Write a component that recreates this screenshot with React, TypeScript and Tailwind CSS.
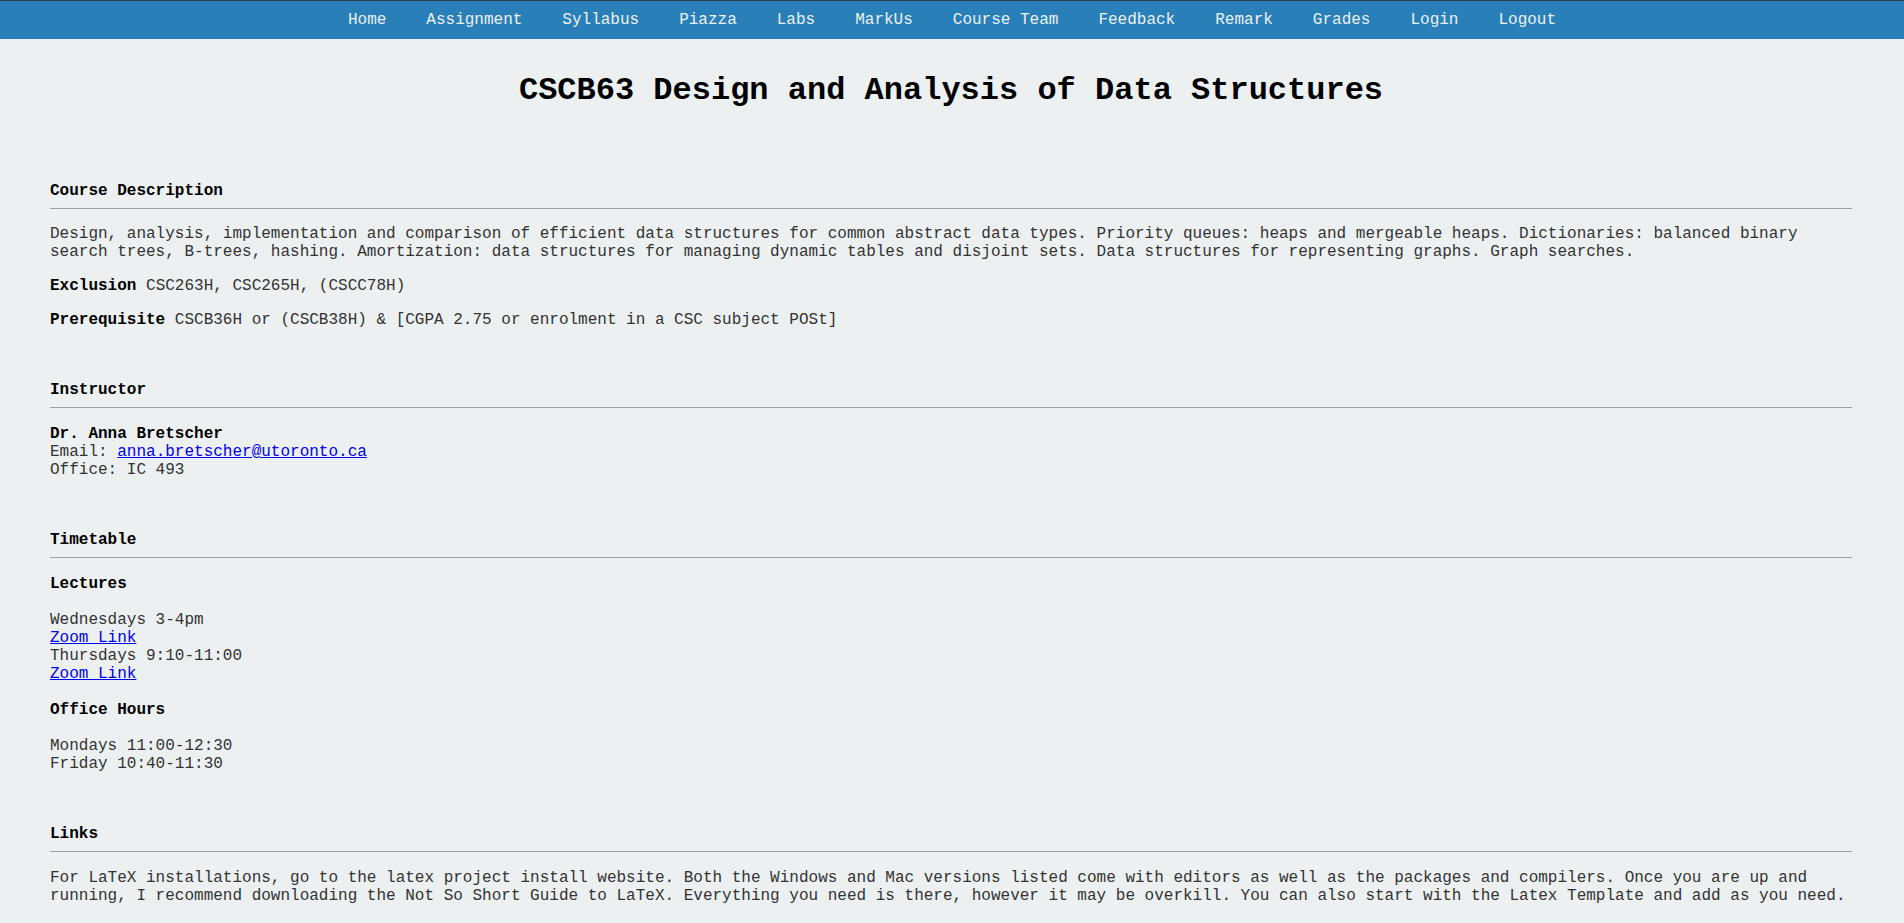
import React from "react";

const NAV_ITEMS = [
  "Home",
  "Assignment",
  "Syllabus",
  "Piazza",
  "Labs",
  "MarkUs",
  "Course Team",
  "Feedback",
  "Remark",
  "Grades",
  "Login",
  "Logout",
];

const Section = ({
  title,
  first,
  children,
}: {
  title: string;
  first?: boolean;
  children: React.ReactNode;
}) => (
  <section className={first ? "mt-[73px]" : "mt-[52px]"}>
    <h4 className="font-bold text-black">{title}</h4>
    <hr className="mt-2 border-0 h-px bg-[#a0a0a0]" />
    <div className={first ? "mt-4 flex flex-col gap-4" : "mt-[17px] flex flex-col gap-4"}>
      {children}
    </div>
  </section>
);

const Link = ({ children }: { children: React.ReactNode }) => (
  <a href="#" className="text-[#0000ee] underline">
    {children}
  </a>
);

export default function App() {
  return (
    <div className="min-h-screen bg-[#ecf0f1] font-['Liberation_Mono','Courier_New',monospace] text-[16px] leading-[normal] text-[#333]">
      <nav className="h-[39px] border-t border-[#2c3e50] bg-[#2980b9]">
        <ul className="flex h-full items-center justify-center">
          {NAV_ITEMS.map((item) => (
            <li key={item} className="px-5">
              <a href="#" className="text-[#ecf0f1]">
                {item}
              </a>
            </li>
          ))}
        </ul>
      </nav>

      <main className="ml-[50px] mr-[52px] pb-8">
        <h1 className="mt-[33px] text-center text-[32px] font-bold text-black">
          CSCB63 Design and Analysis of Data Structures
        </h1>

        <Section title="Course Description" first>
          <p>
            Design, analysis, implementation and comparison of efficient data structures for
            common abstract data types. Priority queues: heaps and mergeable heaps. Dictionaries:
            balanced binary search trees, B-trees, hashing. Amortization: data structures for
            managing dynamic tables and disjoint sets. Data structures for representing graphs.
            Graph searches.
          </p>
          <p>
            <b className="text-black">Exclusion</b> CSC263H, CSC265H, (CSCC78H)
          </p>
          <p>
            <b className="text-black">Prerequisite</b> CSCB36H or (CSCB38H) &amp; [CGPA 2.75 or
            enrolment in a CSC subject POSt]
          </p>
        </Section>

        <Section title="Instructor">
          <p>
            <b className="text-black">Dr. Anna Bretscher</b>
            <br />
            Email: <Link>anna.bretscher@utoronto.ca</Link>
            <br />
            Office: IC 493
          </p>
        </Section>

        <Section title="Timetable">
          <div className="flex flex-col gap-[18px]">
            <h5 className="font-bold text-black">Lectures</h5>
            <p>
              Wednesdays 3-4pm
              <br />
              <Link>Zoom Link</Link>
              <br />
              Thursdays 9:10-11:00
              <br />
              <Link>Zoom Link</Link>
            </p>
            <h5 className="font-bold text-black">Office Hours</h5>
            <p>
              Mondays 11:00-12:30
              <br />
              Friday 10:40-11:30
            </p>
          </div>
        </Section>

        <Section title="Links">
          <p>
            For LaTeX installations, go to the latex project install website. Both the Windows and
            Mac versions listed come with editors as well as the packages and compilers. Once you
            are up and running, I recommend downloading the Not So Short Guide to LaTeX. Everything
            you need is there, however it may be overkill. You can also start with the Latex
            Template and add as you need.
          </p>
        </Section>
      </main>
    </div>
  );
}
